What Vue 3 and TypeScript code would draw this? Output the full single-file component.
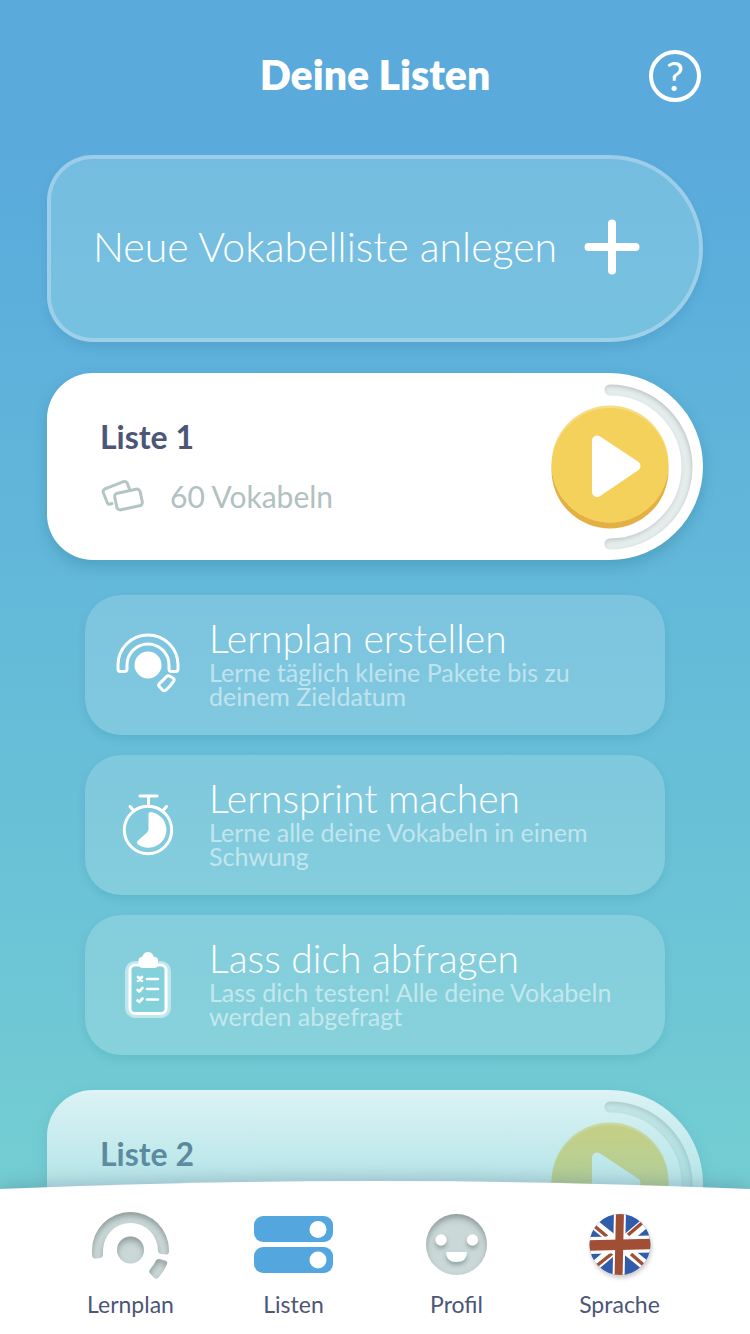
<script setup lang="ts">
type IconName = 'plan' | 'sprint' | 'quiz'
type TabName = 'plan' | 'lists' | 'profile' | 'language'

interface StudyOption {
  icon: IconName
  title: string
  text: string
}

const options: StudyOption[] = [
  { icon: 'plan', title: 'Lernplan erstellen', text: 'Lerne täglich kleine Pakete bis zu deinem Zieldatum' },
  { icon: 'sprint', title: 'Lernsprint machen', text: 'Lerne alle deine Vokabeln in einem Schwung' },
  { icon: 'quiz', title: 'Lass dich abfragen', text: 'Lass dich testen! Alle deine Vokabeln werden abgefragt' },
]

const lists: { name: string; words: number; open: boolean }[] = [
  { name: 'Liste 1', words: 60, open: true },
  { name: 'Liste 2', words: 60, open: false },
]

const tabs: { id: TabName; label: string }[] = [
  { id: 'plan', label: 'Lernplan' },
  { id: 'lists', label: 'Listen' },
  { id: 'profile', label: 'Profil' },
  { id: 'language', label: 'Sprache' },
]
</script>

<template>
  <div class="app">
    <svg class="defs" width="0" height="0" aria-hidden="true">
      <defs>
        <filter id="inset" x="-10%" y="-10%" width="120%" height="120%">
          <feOffset in="SourceAlpha" dy="4" result="off" />
          <feGaussianBlur in="off" stdDeviation="3" result="blur" />
          <feComposite in="SourceAlpha" in2="blur" operator="out" result="edge" />
          <feFlood flood-color="#3a4444" flood-opacity="0.6" />
          <feComposite in2="edge" operator="in" result="shade" />
          <feMerge>
            <feMergeNode in="SourceGraphic" />
            <feMergeNode in="shade" />
          </feMerge>
        </filter>
        <filter id="inset-soft" filterUnits="userSpaceOnUse" x="0" y="0" width="187" height="187">
          <feOffset in="SourceAlpha" dx="-1" dy="2" result="off" />
          <feGaussianBlur in="off" stdDeviation="2" result="blur" />
          <feComposite in="SourceAlpha" in2="blur" operator="out" result="edge" />
          <feFlood flood-color="#3a4444" flood-opacity="0.35" />
          <feComposite in2="edge" operator="in" result="shade" />
          <feMerge>
            <feMergeNode in="SourceGraphic" />
            <feMergeNode in="shade" />
          </feMerge>
        </filter>
        <clipPath id="face"><circle cx="59" cy="59" r="58.5" /></clipPath>
        <clipPath id="flag"><circle cx="40" cy="34.5" r="30.5" /></clipPath>
      </defs>
    </svg>

    <header class="header">
      <h1>Deine Listen</h1>
      <button class="help" type="button" aria-label="Hilfe">?</button>
    </header>

    <main class="content">
      <button class="new-list" type="button">
        <span>Neue Vokabelliste anlegen</span>
        <svg width="56" height="56" viewBox="0 0 56 56" aria-hidden="true">
          <path d="M28 4.500V51.500M4.500 28H51.500" stroke="#fff" stroke-width="8" stroke-linecap="round" />
        </svg>
      </button>

      <template v-for="list in lists" :key="list.name">
        <section class="card">
          <div class="card-info">
            <h2>{{ list.name }}</h2>
            <p>
              <svg width="44" height="36" viewBox="0 0 44 36" fill="none" stroke="#b3c5c4" stroke-width="3" stroke-linejoin="round" stroke-linecap="round" aria-hidden="true">
                <path d="M11 25.500L8.500 26.200Q7 26.500 6.400 25L2.300 14.500Q1.600 12 4 10.800L22.500 3.600Q25 3 26.200 5L28.800 12" />
                <rect x="14.500" y="13" width="26" height="17" rx="3.500" transform="rotate(-12 27.500 21.500)" />
              </svg>
              {{ list.words }} Vokabeln
            </p>
          </div>
          <div class="dial">
            <svg class="gauge" width="187" height="187" viewBox="0 0 187 187" fill="none" aria-hidden="true">
              <path d="M94 17A76.500 76.500 0 0 1 94 171" stroke="#e4edec" stroke-width="11" stroke-linecap="round" filter="url(#inset-soft)" />
            </svg>
            <button class="play" type="button" :aria-label="`${list.name} starten`">
              <svg width="118" height="124" viewBox="0 0 118 124" aria-hidden="true">
                <circle cx="59" cy="65" r="58.500" fill="#e4b043" />
                <circle cx="59" cy="59" r="58.500" fill="#f7dd85" />
                <circle cx="59" cy="61.500" r="58.500" fill="#f3d15a" clip-path="url(#face)" />
                <path d="M46 35.500L84.500 61L46 87Z" fill="#fff" stroke="#fff" stroke-width="10" stroke-linejoin="round" />
              </svg>
            </button>
          </div>
        </section>

        <div v-if="list.open" class="options">
          <button v-for="option in options" :key="option.title" class="option" type="button">
            <svg v-if="option.icon === 'plan'" width="64" height="64" viewBox="0 0 64 64" fill="none" stroke="#fff" stroke-width="3" stroke-linejoin="round" aria-hidden="true">
              <path d="M2 33A30 30 0 0 1 62 33V37Q62 39.500 59.500 39.500H55.500Q53 39.500 53 37V33A21 21 0 0 0 11 33V37Q11 39.500 8.500 39.500H4.500Q2 39.500 2 37Z" />
              <circle cx="32" cy="33" r="13.500" fill="#fff" stroke="none" />
              <path d="M50.500 44.500Q52 43 54 44.200L56.800 46Q59 47.300 57.600 49.300Q54.500 54 50 58Q48.300 59.500 46.500 58L43.300 54.500Q42 53 43.500 51.500Q47 48.500 50.500 44.500Z" />
            </svg>
            <svg v-else-if="option.icon === 'sprint'" width="64" height="64" viewBox="0 0 64 64" fill="none" stroke="#fff" stroke-width="3" stroke-linecap="round" aria-hidden="true">
              <path d="M24 4H41M32.500 4V14M14 14.500L17.500 18.500M50.500 14.500L47 18.500" />
              <circle cx="32" cy="38" r="23.700" />
              <path d="M32.500 22Q32.500 19.800 35 20A18 18 0 1 1 22 52.500Q20 50.500 21.800 48.800L31 40.500Q32.500 39 32.500 36.500Z" fill="#fff" stroke="none" />
            </svg>
            <svg v-else width="64" height="68" viewBox="0 0 64 68" fill="none" stroke="#fff" stroke-linecap="round" stroke-linejoin="round" aria-hidden="true">
              <rect x="9" y="11" width="46" height="57" rx="10" fill="#fff" fill-opacity=".48" stroke="none" />
              <rect x="14" y="15" width="36" height="48.500" rx="5" fill="#84d1dc" stroke-width="3" />
              <path d="M22.500 10Q22.500 7 26 7Q28 2 32 2Q36 2 38 7Q42 7 42 10V14Q42 18 38 18H27Q22.500 18 22.500 14Z" fill="#fff" stroke="none" />
              <path d="M31 29H42M31 39H42M31 49.500H42M22 27L26 31M26 27L22 31M21.500 40L23.200 41.500L26.500 38M21.500 50.500L23.200 52L26.500 48.500" stroke-width="2.600" />
            </svg>
            <span class="option-copy">
              <span class="option-title">{{ option.title }}</span>
              <span class="option-text">{{ option.text }}</span>
            </span>
          </button>
        </div>
      </template>
    </main>

    <nav class="tabs" aria-label="Hauptnavigation">
      <svg class="curve" viewBox="0 0 750 154" preserveAspectRatio="none" aria-hidden="true">
        <path d="M0 9Q375 -7 750 9V154H0Z" fill="#fff" />
      </svg>
      <a v-for="tab in tabs" :key="tab.id" :href="`#${tab.id}`" class="tab" :aria-current="tab.id === 'lists' ? 'page' : undefined">
        <svg v-if="tab.id === 'plan'" width="80" height="70" viewBox="0 0 80 70" fill="#cad9d8" aria-hidden="true">
          <g filter="url(#inset)">
            <path d="M1 40.500A38.500 38.500 0 0 1 78 40.500Q78.300 44.500 75 44.500L70.500 44Q67 43.500 67 40.500A27.500 27.500 0 0 0 12 40.500V44.500Q12 47.500 9.500 47.800L5 48.500Q1.500 49 1 45Z" />
            <circle cx="39.500" cy="40" r="13.500" />
            <path d="M65 50.500Q66 48.500 68.500 49L74 50.500Q77 51.500 76 54Q73 61.500 67.500 67.500Q65 70 63 67.500L59 63.500Q57.500 61.500 59 59.500Q63 55 65 50.500Z" />
          </g>
        </svg>
        <svg v-else-if="tab.id === 'lists'" width="80" height="70" viewBox="0 0 80 70" fill="#54a7de" aria-hidden="true">
          <rect x="0" y="6" width="79" height="26" rx="9" />
          <rect x="0" y="37" width="79" height="26" rx="9" />
          <circle cx="64" cy="19.500" r="8.500" fill="#fff" />
          <circle cx="64" cy="50" r="8.500" fill="#fff" />
        </svg>
        <svg v-else-if="tab.id === 'profile'" class="profile" width="80" height="70" viewBox="0 0 80 70" aria-hidden="true">
          <circle cx="39.500" cy="34.500" r="30.500" fill="#cad9d8" filter="url(#inset)" />
          <g class="features" fill="#fff">
            <circle cx="24" cy="30" r="5.700" />
            <circle cx="55.500" cy="30" r="5.700" />
            <path d="M29.300 42H50Q50 52 39.500 52T29.300 42Z" />
          </g>
        </svg>
        <svg v-else class="flag" width="80" height="70" viewBox="0 0 80 70" aria-hidden="true">
          <g clip-path="url(#flag)">
            <rect x="8" y="3" width="64" height="64" fill="#315bab" />
            <path d="M10 11L70 59M70 9L10 60" stroke="#fff" stroke-width="10" />
            <path d="M15 16.500L27 26.500M62 13L48 25M17 55.500L32 43.500M51 44L63 54.500" stroke="#a04f35" stroke-width="3.500" />
            <path d="M40 0L38.500 70" stroke="#fff" stroke-width="12" />
            <path d="M6 35.500L74 34" stroke="#fff" stroke-width="17" />
            <path d="M40 0L38.500 70" stroke="#a04f35" stroke-width="8" />
            <path d="M6 35.500L74 34" stroke="#a04f35" stroke-width="10.500" />
          </g>
        </svg>
        <span>{{ tab.label }}</span>
      </a>
    </nav>
  </div>
</template>

<style>
html,
body {
  margin: 0;
}
</style>

<style scoped>
.app {
  position: relative;
  height: 100vh;
  display: flex;
  flex-direction: column;
  overflow: hidden;
  box-sizing: border-box;
  font-family: Lato, "Open Sans", sans-serif;
  color: #fff;
  background: linear-gradient(#5aabdc 0%, #5aabdc 12%, #66bed8 56%, #74ced2 90%);
}

.defs {
  position: absolute;
}

button {
  font: inherit;
  color: inherit;
  border: 0;
  padding: 0;
  background: none;
  cursor: pointer;
}

h1,
h2,
p {
  margin: 0;
}

.header {
  flex: none;
  display: grid;
  grid-template-columns: 1fr auto 1fr;
  align-items: center;
  padding: 50px 49px 53px;
}

h1 {
  grid-column: 2;
  padding-bottom: 2px;
  font-size: 41px;
  line-height: 50px;
  font-weight: 800;
}

.help {
  justify-self: end;
  width: 52px;
  height: 52px;
  border: 4px solid #fff;
  border-radius: 50%;
  font-size: 40px;
  line-height: 44px;
  text-align: center;
}

.content {
  flex: 1;
  min-height: 0;
  overflow-y: auto;
  scrollbar-width: none;
  padding: 0 47px;
}

.new-list {
  width: 100%;
  min-height: 187px;
  display: flex;
  align-items: center;
  justify-content: space-between;
  box-sizing: border-box;
  padding: 0 59px 3px 42px;
  margin-bottom: 31px;
  border: 4px solid rgba(255, 255, 255, 0.4);
  border-radius: 46px 94px 94px 46px;
  background: rgba(180, 232, 236, 0.3);
  background-clip: padding-box;
  box-shadow: 0 6px 10px rgba(30, 100, 140, 0.14);
  font-size: 41px;
  line-height: 48px;
  font-weight: 300;
  text-align: left;
}

.card {
  display: flex;
  justify-content: space-between;
  min-height: 187px;
  border-radius: 46px 94px 94px 46px;
  background: #fff;
  box-shadow: 0 6px 14px rgba(20, 90, 125, 0.25);
}

.card-info {
  padding: 44px 0 0 53px;
}

h2 {
  font-size: 32px;
  line-height: 40px;
  font-weight: 700;
  color: #4c5676;
}

.card-info p {
  display: flex;
  align-items: center;
  gap: 25px;
  margin: 21px 0 0 1px;
  font-size: 30px;
  line-height: 36px;
  color: #b0c1c0;
}

.dial {
  display: grid;
  place-items: center;
}

.gauge,
.play {
  grid-area: 1 / 1;
}

svg {
  display: block;
  flex: none;
}

.options {
  display: flex;
  flex-direction: column;
  gap: 20px;
  padding: 35px 38px;
}

.option {
  display: flex;
  align-items: center;
  gap: 29px;
  box-sizing: border-box;
  min-height: 140px;
  padding: 0 32px 2px 31px;
  border-radius: 36px;
  background: rgba(255, 255, 255, 0.17);
  box-shadow: 0 4px 8px rgba(20, 100, 130, 0.13);
  text-align: left;
}

.option-copy {
  display: flex;
  flex-direction: column;
  padding-bottom: 4px;
}

.option-title {
  font-size: 39px;
  line-height: 44px;
  font-weight: 300;
}

.option-text {
  font-size: 25px;
  line-height: 24px;
  color: rgba(255, 255, 255, 0.52);
}

.tabs {
  position: absolute;
  left: 0;
  right: 0;
  bottom: 0;
  display: grid;
  grid-template-columns: repeat(4, 1fr);
  padding: 30px 49px 16px;
}

.tabs::before {
  content: "";
  position: absolute;
  left: 0;
  right: 0;
  bottom: 100%;
  height: 150px;
  margin-bottom: -10px;
  background: linear-gradient(rgba(114, 205, 211, 0), rgba(114, 205, 211, 0.28) 40%, rgba(114, 205, 211, 0.54));
  pointer-events: none;
}

.curve {
  position: absolute;
  width: 100%;
  height: 100%;
  filter: drop-shadow(0 -4px 8px rgba(80, 80, 110, 0.25));
}

.tab {
  position: relative;
  display: flex;
  flex-direction: column;
  align-items: center;
  gap: 10px;
  font-size: 23px;
  line-height: 28px;
  color: #4c5676;
  text-decoration: none;
}

.features {
  filter: drop-shadow(0 3px 2px rgba(60, 80, 80, 0.4));
}

.flag {
  filter: drop-shadow(1px 3px 2px rgba(0, 0, 0, 0.2));
}
</style>
